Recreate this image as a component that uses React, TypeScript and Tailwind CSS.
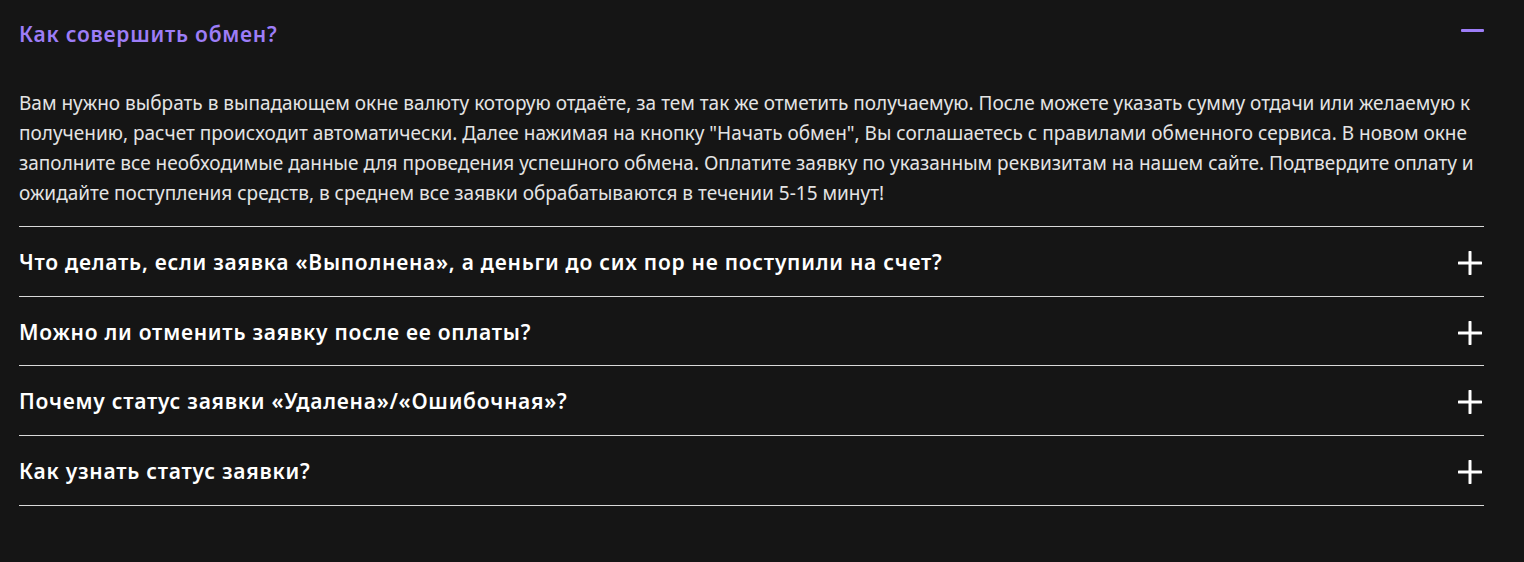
import { useState } from "react"

const items = [
  {
    q: "Как совершить обмен?",
    a: 'Вам нужно выбрать в выпадающем окне валюту которую отдаёте, за тем так же отметить получаемую. После можете указать сумму отдачи или желаемую к получению, расчет происходит автоматически. Далее нажимая на кнопку "Начать обмен", Вы соглашаетесь с правилами обменного сервиса. В новом окне заполните все необходимые данные для проведения успешного обмена. Оплатите заявку по указанным реквизитам на нашем сайте. Подтвердите оплату и ожидайте поступления средств, в среднем все заявки обрабатываются в течении 5-15 минут!',
  },
  {
    q: "Что делать, если заявка «Выполнена», а деньги до сих пор не поступили на счет?",
    a: "Свяжитесь с нашей службой поддержки и укажите номер заявки.",
  },
  {
    q: "Можно ли отменить заявку после ее оплаты?",
    a: "Отмена оплаченной заявки возможна только через службу поддержки.",
  },
  {
    q: "Почему статус заявки «Удалена»/«Ошибочная»?",
    a: "Заявка могла быть не оплачена вовремя или содержать неверные данные.",
  },
  {
    q: "Как узнать статус заявки?",
    a: "Статус заявки отображается на странице заявки в личном кабинете.",
  },
]

function Icon({ open }: { open: boolean }) {
  if (open) {
    return <span className="mb-[8px] block h-[3px] w-[23px] shrink-0 rounded-[1px] bg-[#9d7df7]" />
  }
  return (
    <svg width="24" height="24" viewBox="0 0 24 24" className="mr-[2px] shrink-0">
      <path d="M1 12h22M12 1v22" stroke="#ffffff" strokeWidth="3" strokeLinecap="round" />
    </svg>
  )
}

export default function App() {
  const [open, setOpen] = useState(0)

  return (
    <div className="min-h-[562px] bg-[#151515] pl-[19px] pr-[40px] pb-10" style={{ fontFamily: '"Noto Sans", "Open Sans", sans-serif' }}>
      {items.map((item, i) => {
        const isOpen = open === i
        return (
          <div key={i} className="border-b border-[#d9d9d9]">
            <button
              onClick={() => setOpen(isOpen ? -1 : i)}
              className={`flex w-full items-center justify-between pt-[3px] text-left text-[21px] font-semibold tracking-[0.75px] ${isOpen ? "h-[66px] text-[#9d7df7]" : "h-[68.7px] text-white"}`}
            >
              <span>{item.q}</span>
              <Icon open={isOpen} />
            </button>
            {isOpen && (
              <p className="pt-[22px] pb-[18px] text-[19px] leading-[30px] text-[#e4e4e4]">{item.a}</p>
            )}
          </div>
        )
      })}
    </div>
  )
}
